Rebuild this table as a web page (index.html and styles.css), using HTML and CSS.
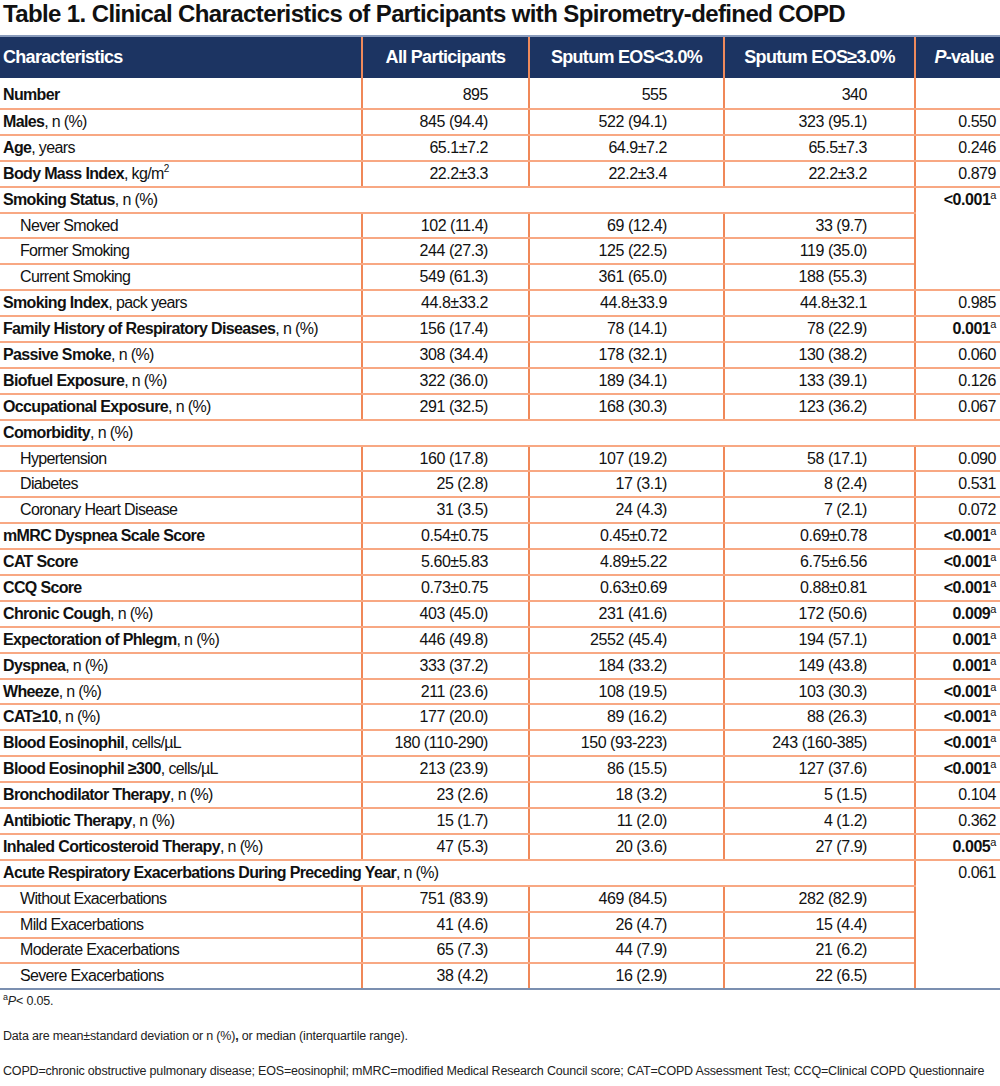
FILE: index.html
```html
<!DOCTYPE html>
<html>
<head>
<meta charset="utf-8">
<link rel="stylesheet" href="styles.css">
</head>
<body>
<div class="page">
<h1 class="title">Table 1. Clinical Characteristics of Participants with Spirometry-defined COPD</h1>
<table class="tbl">
<colgroup><col class="c1"><col class="c2"><col class="c3"><col class="c4"><col class="c5"></colgroup>
<thead>
<tr class="head"><th class="lab">Characteristics</th><th>All Participants</th><th>Sputum EOS&lt;3.0%</th><th>Sputum EOS≥3.0%</th><th class="pv"><i>P</i>-value</th></tr>
</thead>
<tbody>
<tr class="first"><td class="lab"><b>Number</b></td><td class="a">895</td><td class="b">555</td><td class="c">340</td><td class="p"></td></tr>
<tr><td class="lab"><b>Males</b>, n (%)</td><td class="a">845 (94.4)</td><td class="b">522 (94.1)</td><td class="c">323 (95.1)</td><td class="p">0.550</td></tr>
<tr><td class="lab"><b>Age</b>, years</td><td class="a">65.1±7.2</td><td class="b">64.9±7.2</td><td class="c">65.5±7.3</td><td class="p">0.246</td></tr>
<tr><td class="lab"><b>Body Mass Index</b>, kg/m<sup class="u">2</sup></td><td class="a">22.2±3.3</td><td class="b">22.2±3.4</td><td class="c">22.2±3.2</td><td class="p">0.879</td></tr>
<tr><td class="lab span" colspan="4"><b>Smoking Status</b>, n (%)</td><td class="p top" rowspan="4"><b>&lt;0.001</b><sup>a</sup></td></tr>
<tr><td class="lab sub">Never Smoked</td><td class="a">102 (11.4)</td><td class="b">69 (12.4)</td><td class="c">33 (9.7)</td></tr>
<tr><td class="lab sub">Former Smoking</td><td class="a">244 (27.3)</td><td class="b">125 (22.5)</td><td class="c">119 (35.0)</td></tr>
<tr><td class="lab sub">Current Smoking</td><td class="a">549 (61.3)</td><td class="b">361 (65.0)</td><td class="c">188 (55.3)</td></tr>
<tr><td class="lab"><b>Smoking Index</b>, pack years</td><td class="a">44.8±33.2</td><td class="b">44.8±33.9</td><td class="c">44.8±32.1</td><td class="p">0.985</td></tr>
<tr><td class="lab"><b>Family History of Respiratory Diseases</b>, n (%)</td><td class="a">156 (17.4)</td><td class="b">78 (14.1)</td><td class="c">78 (22.9)</td><td class="p"><b>0.001</b><sup>a</sup></td></tr>
<tr><td class="lab"><b>Passive Smoke</b>, n (%)</td><td class="a">308 (34.4)</td><td class="b">178 (32.1)</td><td class="c">130 (38.2)</td><td class="p">0.060</td></tr>
<tr><td class="lab"><b>Biofuel Exposure</b>, n (%)</td><td class="a">322 (36.0)</td><td class="b">189 (34.1)</td><td class="c">133 (39.1)</td><td class="p">0.126</td></tr>
<tr><td class="lab"><b>Occupational Exposure</b>, n (%)</td><td class="a">291 (32.5)</td><td class="b">168 (30.3)</td><td class="c">123 (36.2)</td><td class="p">0.067</td></tr>
<tr><td class="lab span" colspan="5"><b>Comorbidity</b>, n (%)</td></tr>
<tr><td class="lab sub">Hypertension</td><td class="a">160 (17.8)</td><td class="b">107 (19.2)</td><td class="c">58 (17.1)</td><td class="p">0.090</td></tr>
<tr><td class="lab sub">Diabetes</td><td class="a">25 (2.8)</td><td class="b">17 (3.1)</td><td class="c">8 (2.4)</td><td class="p">0.531</td></tr>
<tr><td class="lab sub">Coronary Heart Disease</td><td class="a">31 (3.5)</td><td class="b">24 (4.3)</td><td class="c">7 (2.1)</td><td class="p">0.072</td></tr>
<tr><td class="lab"><b>mMRC Dyspnea Scale Score</b></td><td class="a">0.54±0.75</td><td class="b">0.45±0.72</td><td class="c">0.69±0.78</td><td class="p"><b>&lt;0.001</b><sup>a</sup></td></tr>
<tr><td class="lab"><b>CAT Score</b></td><td class="a">5.60±5.83</td><td class="b">4.89±5.22</td><td class="c">6.75±6.56</td><td class="p"><b>&lt;0.001</b><sup>a</sup></td></tr>
<tr><td class="lab"><b>CCQ Score</b></td><td class="a">0.73±0.75</td><td class="b">0.63±0.69</td><td class="c">0.88±0.81</td><td class="p"><b>&lt;0.001</b><sup>a</sup></td></tr>
<tr><td class="lab"><b>Chronic Cough</b>, n (%)</td><td class="a">403 (45.0)</td><td class="b">231 (41.6)</td><td class="c">172 (50.6)</td><td class="p"><b>0.009</b><sup>a</sup></td></tr>
<tr><td class="lab"><b>Expectoration of Phlegm</b>, n (%)</td><td class="a">446 (49.8)</td><td class="b">2552 (45.4)</td><td class="c">194 (57.1)</td><td class="p"><b>0.001</b><sup>a</sup></td></tr>
<tr><td class="lab"><b>Dyspnea</b>, n (%)</td><td class="a">333 (37.2)</td><td class="b">184 (33.2)</td><td class="c">149 (43.8)</td><td class="p"><b>0.001</b><sup>a</sup></td></tr>
<tr><td class="lab"><b>Wheeze</b>, n (%)</td><td class="a">211 (23.6)</td><td class="b">108 (19.5)</td><td class="c">103 (30.3)</td><td class="p"><b>&lt;0.001</b><sup>a</sup></td></tr>
<tr><td class="lab"><b>CAT≥10</b>, n (%)</td><td class="a">177 (20.0)</td><td class="b">89 (16.2)</td><td class="c">88 (26.3)</td><td class="p"><b>&lt;0.001</b><sup>a</sup></td></tr>
<tr><td class="lab"><b>Blood Eosinophil</b>, cells/µL</td><td class="a">180 (110-290)</td><td class="b">150 (93-223)</td><td class="c">243 (160-385)</td><td class="p"><b>&lt;0.001</b><sup>a</sup></td></tr>
<tr><td class="lab"><b>Blood Eosinophil ≥300</b>, cells/µL</td><td class="a">213 (23.9)</td><td class="b">86 (15.5)</td><td class="c">127 (37.6)</td><td class="p"><b>&lt;0.001</b><sup>a</sup></td></tr>
<tr><td class="lab"><b>Bronchodilator Therapy</b>, n (%)</td><td class="a">23 (2.6)</td><td class="b">18 (3.2)</td><td class="c">5 (1.5)</td><td class="p">0.104</td></tr>
<tr><td class="lab"><b>Antibiotic Therapy</b>, n (%)</td><td class="a">15 (1.7)</td><td class="b">11 (2.0)</td><td class="c">4 (1.2)</td><td class="p">0.362</td></tr>
<tr><td class="lab"><b>Inhaled Corticosteroid Therapy</b>, n (%)</td><td class="a">47 (5.3)</td><td class="b">20 (3.6)</td><td class="c">27 (7.9)</td><td class="p"><b>0.005</b><sup>a</sup></td></tr>
<tr><td class="lab span" colspan="4"><b>Acute Respiratory Exacerbations During Preceding Year</b>, n (%)</td><td class="p top last" rowspan="5">0.061</td></tr>
<tr><td class="lab sub">Without Exacerbations</td><td class="a">751 (83.9)</td><td class="b">469 (84.5)</td><td class="c">282 (82.9)</td></tr>
<tr><td class="lab sub">Mild Exacerbations</td><td class="a">41 (4.6)</td><td class="b">26 (4.7)</td><td class="c">15 (4.4)</td></tr>
<tr><td class="lab sub">Moderate Exacerbations</td><td class="a">65 (7.3)</td><td class="b">44 (7.9)</td><td class="c">21 (6.2)</td></tr>
<tr class="lastrow"><td class="lab sub">Severe Exacerbations</td><td class="a">38 (4.2)</td><td class="b">16 (2.9)</td><td class="c">22 (6.5)</td></tr>
</tbody>
</table>
<div class="notes">
<p class="note n1"><sup>a</sup><i>P</i>&lt; 0.05.</p>
<p class="note n2">Data are mean±standard deviation or n (%)<b>,</b> or median (interquartile range).</p>
<p class="note n3">COPD=chronic obstructive pulmonary disease; EOS=eosinophil; mMRC=modified Medical Research Council score; CAT=COPD Assessment Test; CCQ=Clinical COPD Questionnaire</p>
</div>
</div>
</body>
</html>
```
FILE: styles.css
```css
html, body {
  margin: 0;
  padding: 0;
  background: #ffffff;
}
body {
  font-family: "Liberation Sans", Arial, sans-serif;
  color: #111111;
}
.page {
  width: 1000px;
}
.title {
  margin: 0;
  padding: 1px 0 0 3px;
  height: 35px;
  box-sizing: border-box;
  font-size: 24px;
  line-height: 26px;
  font-weight: bold;
  letter-spacing: -0.62px;
  color: #111;
}
.tbl {
  width: 1000px;
  border-collapse: collapse;
  table-layout: fixed;
  font-size: 16px;
  letter-spacing: -0.45px;
}
.c1 { width: 362px; }
.c2 { width: 167px; }
.c3 { width: 195px; }
.c4 { width: 191px; }
.c5 { width: 85px; }
.head th {
  background: #1c3462;
  color: #ffffff;
  font-size: 18px;
  font-weight: bold;
  letter-spacing: -0.7px;
  height: 42px;
  padding: 0;
  text-align: center;
  border-top: 2px solid #8a9cbc;
  border-left: 2px solid #ef8a5c;
  box-sizing: border-box;
}
.head th.lab {
  text-align: left;
  padding-left: 3px;
  border-left: none;
}
.head th.pv { padding-left: 12px; }
td {
  height: 23.9px;
  padding: 0;
  border-bottom: 2px solid #f8a883;
  border-left: 2px solid #f08858;
  white-space: nowrap;
  vertical-align: middle;
  line-height: 18px;
}
tr.first td { height: 26px; padding-top: 4px; }
td.lab {
  border-left: none;
  padding-left: 3px;
  text-align: left;
  letter-spacing: -0.65px;
}
td.sub { padding-left: 20px; }
td.a { text-align: right; padding-right: 40px; }
td.b { text-align: right; padding-right: 56px; }
td.c { text-align: right; padding-right: 47px; }
td.p { text-align: right; padding-right: 4px; }
td.top { vertical-align: top; padding-top: 3px; }
td.last { border-bottom: 2px solid #7b8fb0; }
tr.lastrow td { border-bottom: 2px solid #7b8fb0; }
sup {
  font-size: 11px;
  font-weight: normal;
  line-height: 0;
  vertical-align: 6px;
}
sup.u { font-size: 10px; vertical-align: 7px; }
.notes {
  font-size: 12.5px;
  color: #222;
  letter-spacing: -0.18px;
}
.note { margin: 0; line-height: 15px; }
.n1 { padding: 4px 0 0 3px; }
.n2 { padding: 20px 0 0 3px; }
.n3 { padding: 20px 0 0 3px; }
.n1 sup { font-size: 9px; vertical-align: 5px; }
```
